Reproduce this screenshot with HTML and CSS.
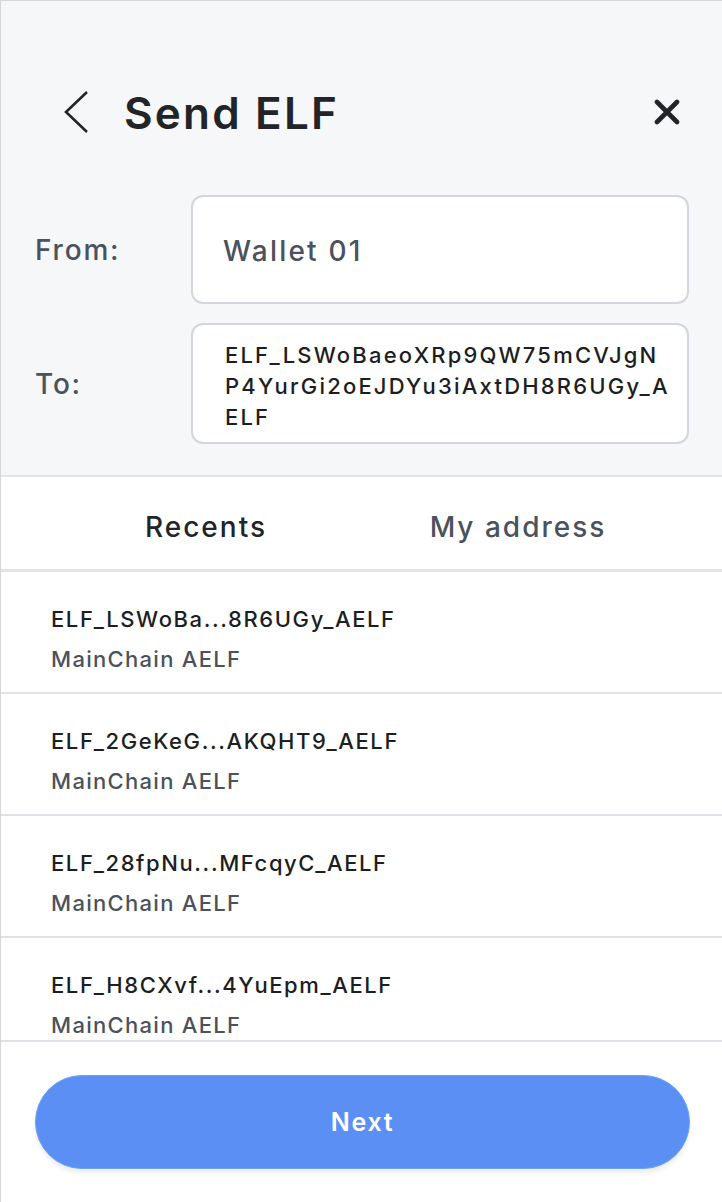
FILE: index.html
```html
<!DOCTYPE html>
<html>
<head>
<meta charset="utf-8">
<link rel="stylesheet" href="styles.css">
</head>
<body>
<div class="app">
  <header class="top">
    <div class="title-row">
      <div class="title-left">
        <svg class="back" width="28" height="44" viewBox="0 0 28 44"><path d="M25 2 L4 22 L25 42" fill="none" stroke="#222428" stroke-width="2.6"/></svg>
        <h1 class="title">Send ELF</h1>
      </div>
      <svg class="close" width="26" height="26" viewBox="0 0 26 26"><path d="M3 3 L23 23 M23 3 L3 23" stroke="#222428" stroke-width="4.6" stroke-linecap="round"/></svg>
    </div>
    <div class="form">
      <div class="row row-from">
        <span class="label">From:</span>
        <div class="box box-from">Wallet 01</div>
      </div>
      <div class="row row-to">
        <span class="label">To:</span>
        <div class="box box-to"><span class="line">ELF_LSWoBaeoXRp9QW75mCVJgN</span><span class="line">P4YurGi2oEJDYu3iAxtDH8R6UGy_A</span><span class="line">ELF</span></div>
      </div>
    </div>
  </header>
  <nav class="tabs">
    <div class="tab active">Recents</div>
    <div class="tab">My address</div>
  </nav>
  <div class="list">
    <div class="item"><div class="addr">ELF_LSWoBa...8R6UGy_AELF</div><div class="chain">MainChain AELF</div></div>
    <div class="item"><div class="addr">ELF_2GeKeG...AKQHT9_AELF</div><div class="chain">MainChain AELF</div></div>
    <div class="item"><div class="addr">ELF_28fpNu...MFcqyC_AELF</div><div class="chain">MainChain AELF</div></div>
    <div class="item"><div class="addr">ELF_H8CXvf...4YuEpm_AELF</div><div class="chain">MainChain AELF</div></div>
  </div>
  <footer class="bottom">
    <button class="next">Next</button>
  </footer>
</div>
</body>
</html>
```
FILE: styles.css
```css
html, body {
  margin: 0;
  padding: 0;
  background: #ffffff;
}
body {
  font-family: "Inter", "Noto Sans", sans-serif;
  color: #222428;
}
.app {
  width: 721px;
  height: 1201px;
  border-left: 1px solid #d6d7d9;
  border-top: 1px solid #d6d7d9;
  display: flex;
  flex-direction: column;
  overflow: hidden;
}
.top {
  background: #f6f7f9;
  height: 476px;
  box-sizing: border-box;
  border-bottom: 2px solid #e3e5e9;
  padding: 69px 33px 0 34px;
}
.title-row {
  height: 86px;
  display: flex;
  align-items: center;
  justify-content: space-between;
}
.title-left {
  display: flex;
  align-items: center;
}
.back {
  margin-left: 27px;
  margin-top: -2px;
}
.title {
  margin: 0 0 0 34px;
  font-size: 44px;
  font-weight: 600;
  color: #222428;
  letter-spacing: 2.2px;
}
.close {
  margin-right: 9px;
  margin-top: -2px;
}
.form {
  margin-top: 39px;
  display: flex;
  flex-direction: column;
  gap: 19px;
}
.row {
  display: flex;
  align-items: center;
  justify-content: space-between;
}
.label {
  font-size: 28px;
  font-weight: 500;
  letter-spacing: 1.8px;
  color: #4b525b;
}
.box {
  width: 498px;
  box-sizing: border-box;
  background: #ffffff;
  border: 2px solid #d3d6dc;
  border-radius: 12px;
}
.box-from {
  height: 109px;
  display: flex;
  align-items: center;
  padding-left: 30px;
  padding-top: 2px;
  font-size: 28px;
  font-weight: 500;
  letter-spacing: 2.2px;
  color: #4b525b;
}
.box-to {
  height: 121px;
  padding: 15px 10px 0 32px;
  font-size: 22px;
  line-height: 31px;
  font-weight: 500;
  letter-spacing: 2.2px;
  color: #1c1e21;
  white-space: nowrap;
}
.line {
  display: block;
}
.tabs {
  height: 95px;
  flex: none;
  display: flex;
  padding: 0 48px 0 49px;
  border-bottom: 3px solid #e2e4e8;
  box-sizing: border-box;
}
.tab {
  flex: 1;
  display: flex;
  align-items: center;
  justify-content: center;
  font-size: 28px;
  font-weight: 500;
  letter-spacing: 2px;
  color: #4b525b;
  padding-top: 7px;
}
.tab.active {
  color: #222428;
}
.list {
  flex: 1;
  overflow: hidden;
  border-bottom: 2px solid #e0e3e8;
}
.item {
  height: 122px;
  box-sizing: border-box;
  border-bottom: 2px solid #e0e3e8;
  padding: 31px 0 0 50px;
}
.addr {
  font-size: 22px;
  font-weight: 500;
  letter-spacing: 1.6px;
  color: #1c1e21;
  line-height: 32px;
}
.chain {
  margin-top: 8px;
  font-size: 22px;
  font-weight: 500;
  letter-spacing: 1.3px;
  color: #4b525b;
  line-height: 32px;
}
.bottom {
  height: 160px;
  flex: none;
  padding: 33px 32px 0 34px;
  box-sizing: border-box;
}
.next {
  width: 100%;
  height: 94px;
  border-radius: 47px;
  border: 1px solid #6ba3f6;
  background: #5b8ff3;
  color: #ffffff;
  font-family: "Inter", "Noto Sans", sans-serif;
  font-size: 25px;
  font-weight: 600;
  letter-spacing: 1.7px;
  box-shadow: 0 4px 4px rgba(0, 0, 0, 0.07);
}
```
